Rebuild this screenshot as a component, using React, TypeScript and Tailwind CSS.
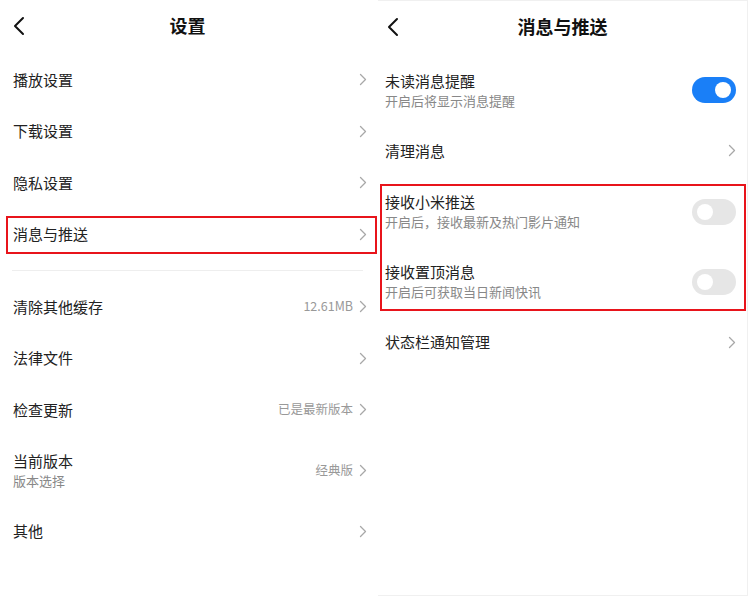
const font = { fontFamily: '"Noto Sans CJK SC", "Noto Sans", sans-serif' };

const Chevron = () => (
  <svg width="8" height="13" viewBox="0 0 8 13" className="shrink-0">
    <path d="M1.5 1.5 L6.5 6.5 L1.5 11.5" fill="none" stroke="#a8a8a8" strokeWidth="1.3" strokeLinecap="round" strokeLinejoin="round" />
  </svg>
);

const Back = () => (
  <svg width="14" height="20" viewBox="0 0 14 20">
    <path d="M11 2 L3 10 L11 18" fill="none" stroke="#111" strokeWidth="2" strokeLinecap="round" strokeLinejoin="round" />
  </svg>
);

const Toggle = ({ on }: { on: boolean }) => (
  <div
    className={`flex h-[26px] w-[44px] shrink-0 items-center rounded-full px-[5px] ${
      on ? 'justify-end bg-[#1a7ff7]' : 'justify-start bg-[#e6e6e6]'
    }`}
  >
    <div className="h-[16px] w-[16px] rounded-full bg-white" />
  </div>
);

const Header = ({ title, pl }: { title: string; pl: string }) => (
  <div className={`relative flex h-[54px] items-center pb-[2px] ${pl}`}>
    <Back />
    <div className="absolute inset-0 flex items-center justify-center pb-[3px] text-[18px] font-bold text-[#111]">
      {title}
    </div>
  </div>
);

const NavRow = ({
  title,
  sub,
  value,
  pl,
  pr,
}: {
  title: string;
  sub?: string;
  value?: string;
  pl: string;
  pr: string;
}) => (
  <div className={`flex items-center ${sub ? 'h-[70px]' : 'h-[51.5px]'} ${pl} ${pr}`}>
    <div className="flex flex-1 flex-col">
      <span className="text-[15px] leading-[20px] text-[#222]">{title}</span>
      {sub && <span className="text-[13px] leading-[19px] text-[#888]">{sub}</span>}
    </div>
    {value && <span className="mr-[6px] text-[12.5px] text-[#999]">{value}</span>}
    <Chevron />
  </div>
);

const ToggleRow = ({ title, sub, on }: { title: string; sub: string; on: boolean }) => (
  <div className="flex h-[70px] items-center pl-[7px] pr-[11px]">
    <div className="flex flex-1 flex-col">
      <span className="text-[15px] leading-[20px] text-[#222]">{title}</span>
      <span className="text-[13px] leading-[19px] text-[#888]">{sub}</span>
    </div>
    <Toggle on={on} />
  </div>
);

export default function App() {
  return (
    <div className="flex h-[596px] w-[750px] bg-white" style={font}>
      {/* 设置 */}
      <div className="w-[375px] shrink-0">
        <Header title="设置" pl="pl-[12px]" />
        <NavRow title="播放设置" pl="pl-[13px]" pr="pr-[8px]" />
        <NavRow title="下载设置" pl="pl-[13px]" pr="pr-[8px]" />
        <NavRow title="隐私设置" pl="pl-[13px]" pr="pr-[8px]" />
        <div className="relative">
          <NavRow title="消息与推送" pl="pl-[13px]" pr="pr-[8px]" />
          <div className="absolute left-[6px] top-[7px] h-[38px] w-[371px] border-2 border-[#e8141b]" />
        </div>
        <div className="mx-[12px] mt-[10px] mb-[10px] h-px bg-[#eeeeee]" />
        <NavRow title="清除其他缓存" value="12.61MB" pl="pl-[13px]" pr="pr-[8px]" />
        <NavRow title="法律文件" pl="pl-[13px]" pr="pr-[8px]" />
        <NavRow title="检查更新" value="已是最新版本" pl="pl-[13px]" pr="pr-[8px]" />
        <NavRow title="当前版本" sub="版本选择" value="经典版" pl="pl-[13px]" pr="pr-[8px]" />
        <NavRow title="其他" pl="pl-[13px]" pr="pr-[8px]" />
      </div>

      {/* 消息与推送 */}
      <div className="ml-[3px] h-full w-[370px] shrink-0 border-y border-r border-[#f0f0f0]">
        <Header title="消息与推送" pl="pl-[8px]" />
        <ToggleRow title="未读消息提醒" sub="开启后将显示消息提醒" on />
        <NavRow title="清理消息" pl="pl-[7px]" pr="pr-[11px]" />
        <div className="relative">
          <ToggleRow title="接收小米推送" sub="开启后，接收最新及热门影片通知" on={false} />
          <ToggleRow title="接收置顶消息" sub="开启后可获取当日新闻快讯" on={false} />
          <div className="absolute left-[2px] right-[1px] top-[7px] bottom-[6px] border-2 border-[#e8141b]" />
        </div>
        <NavRow title="状态栏通知管理" pl="pl-[7px]" pr="pr-[11px]" />
      </div>
    </div>
  );
}
